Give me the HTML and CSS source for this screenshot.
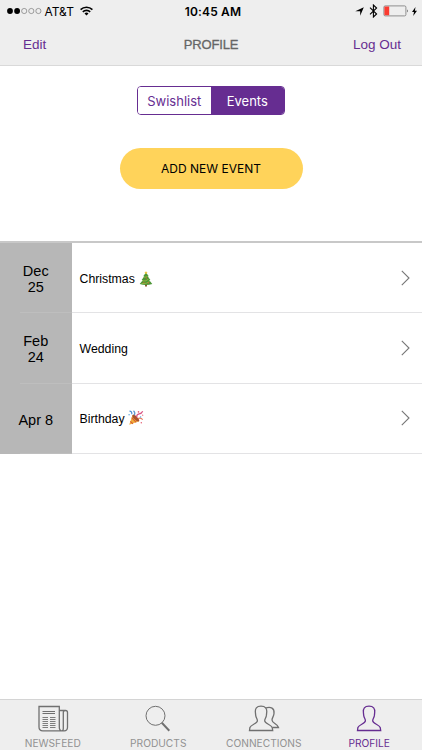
FILE: index.html
```html
<!DOCTYPE html>
<html lang="en">
<head>
  <meta charset="UTF-8" />
  <meta name="viewport" content="width=device-width, initial-scale=1.0"/>
  <title>Profile - Events</title>
  <link rel="stylesheet" href="styles.css">
</head>
<body>
  <header class="header">
    <div class="status-bar">
      <div class="status-left">
        <svg class="signal" width="35" height="8" viewBox="0 0 35 8">
          <circle cx="3" cy="4" r="2.9"/>
          <circle cx="10.1" cy="4" r="2.9"/>
          <g fill="none" stroke="#666" stroke-width=".6">
            <circle cx="17.2" cy="4" r="2.6"/>
            <circle cx="24.3" cy="4" r="2.6"/>
            <circle cx="31.4" cy="4" r="2.6"/>
          </g>
        </svg>
        <span class="carrier">AT&amp;T</span>
        <svg class="wifi" width="13" height="10" viewBox="0 0 13 10">
          <g fill="none" stroke="#000" stroke-width="1.6">
            <path d="M.6 3.6a8.4 8.4 0 0 1 11.8 0"/>
            <path d="M2.8 5.9a5.3 5.3 0 0 1 7.4 0"/>
          </g>
          <path d="M4.5 7.5a2.9 2.9 0 0 1 4 0l-2 2.1z"/>
        </svg>
      </div>
      <span class="time">10:45 AM</span>
      <div class="status-right">
        <svg width="9" height="9" viewBox="0 0 9 9"><path d="M8.8.2L5.2 8.8V4.2H.3z"/></svg>
        <svg class="bluetooth" width="9" height="14" viewBox="0 0 9 14"><path d="M1 3.7l6.6 6.3-3.2 3V1l3.2 3L1 10.3" fill="none" stroke="#000" stroke-width="1.1"/></svg>
        <svg class="battery" width="26" height="12" viewBox="0 0 26 12">
          <rect x=".9" y=".9" width="22" height="10" rx="1.3" fill="none" stroke="#777" stroke-width=".8"/>
          <path d="M2 1.5h4.2v8.8H2a.6.6 0 0 1-.6-.6V2.1a.6.6 0 0 1 .6-.6z" fill="#fb3b30"/>
          <path d="M24 4.2q1.6 1.7 0 3.4z" fill="#444"/>
        </svg>
        <svg width="5" height="9" viewBox="0 0 5 9"><path d="M3.5 0L0 5h2l-.8 4L5 3.7H2.9z"/></svg>
      </div>
    </div>
    <nav class="nav-bar">
      <a class="nav-edit" href="#">Edit</a>
      <h1>PROFILE</h1>
      <a class="nav-logout" href="#">Log Out</a>
    </nav>
  </header>

  <main class="main">
    <div class="segmented">
      <button class="segment">Swishlist</button>
      <button class="segment active">Events</button>
    </div>
    <button class="add-btn">ADD NEW EVENT</button>

    <ul class="events">
      <li class="event">
        <div class="event-date">Dec<br>25</div>
        <div class="event-body">
          <span>Christmas</span>
          <svg class="tree" width="14" height="16" viewBox="0 0 14 16">
            <path d="M6 13h2v2.6H6z" fill="#8b5a35"/>
            <path d="M7 1.4L4.2 5.3l1.1-.1L2.6 9l1.3-.1L.7 13q6.3 1.8 12.6 0L10.1 8.9l1.3.1-2.7-3.8 1.1.1z" fill="#4c9636"/>
            <path d="M4.9 6.1q2.4.5 3.8-1M3.4 10q3.8.5 6.2-2M2.6 12.6q5 .4 8.1-2" fill="none" stroke="#a4b83e" stroke-width=".8"/>
            <path d="M7 0l.5 1 1.1.2-.8.8.2 1.1-1-.5-1 .5.2-1.1-.8-.8L6.5 1z" fill="#edc63e"/>
            <g fill="#d65b35"><circle cx="7.4" cy="6.9" r=".6"/><circle cx="4.9" cy="11.5" r=".6"/><circle cx="9.4" cy="11.9" r=".6"/></g>
          </svg>
          <svg class="chevron" width="9" height="16" viewBox="0 0 9 16"><path d="M.8.8L8 8 .8 15.2"/></svg>
        </div>
      </li>
      <li class="event">
        <div class="event-date">Feb<br>24</div>
        <div class="event-body">
          <span>Wedding</span>
          <svg class="chevron" width="9" height="16" viewBox="0 0 9 16"><path d="M.8.8L8 8 .8 15.2"/></svg>
        </div>
      </li>
      <li class="event">
        <div class="event-date">Apr 8</div>
        <div class="event-body">
          <span>Birthday</span>
          <svg class="party" width="16" height="16" viewBox="0 0 16 16">
            <path d="M4.6 5L1.2 14.8 11 11.3z" fill="#f1ae3c"/>
            <path d="M3.7 7.7l4.5 4.6M2.4 11.4l2.5 2.5" stroke="#d65c34" stroke-width="1.1"/>
            <ellipse cx="7.8" cy="8.1" rx="1.7" ry="4.5" transform="rotate(-45 7.8 8.1)" fill="#a8532f"/>
            <g fill="none" stroke-width="1.2">
              <path d="M1.5 1.2q2.6 0 2.3 3" stroke="#4a8ed4"/>
              <path d="M5.5.8q2.2 2 .8 4.5" stroke="#6096ce"/>
              <path d="M8.7 7.2q-.2-3 2.4-3.3t3.6-2.6" stroke="#d85384"/>
              <path d="M9.9 8.6q2.6-1.5 4.8 1" stroke="#e77656"/>
            </g>
            <g fill="#e45870"><circle cx="10.5" cy="1.9" r=".8"/><circle cx="14.7" cy="5.2" r=".6"/><circle cx="13.3" cy="12.8" r=".7"/></g>
            <g fill="#58a4d8"><circle cx="1.1" cy="4.7" r=".7"/><circle cx="12.6" cy="7" r=".7"/></g>
          </svg>
          <svg class="chevron" width="9" height="16" viewBox="0 0 9 16"><path d="M.8.8L8 8 .8 15.2"/></svg>
        </div>
      </li>
    </ul>
  </main>

  <nav class="tab-bar">
    <a class="tab" href="#">
      <svg width="32" height="28" viewBox="0 0 32 28">
        <path d="M22.3 22V1.5H2V22q0 3.800 3.800 3.800h21.400q3.300 0 3.300-3.500V7.500q0-2-2-2h-6.200M22.300 22q0 3.800 2.500 3.800 1.500 0 1.500-2.300V7.500q0-2 2-2" stroke-width="1.300"/>
        <path d="M5.500 6.500H18M5.500 8.500H18" stroke-width="1"/>
        <path d="M5.500 12.500H11M5.500 14.500H11M5.500 16.500H11M5.500 18.500H11M5.500 20.500H11M5.500 22.500H11M13 12.500h5.500M13 14.500h5.500M13 16.500h5.500M13 18.500h5.500M13 20.500h5.500M13 22.500h5.500" stroke-width=".9"/>
      </svg>
      <span>NEWSFEED</span>
    </a>
    <a class="tab" href="#">
      <svg width="32" height="28" viewBox="0 0 32 28">
        <circle cx="13.500" cy="10.800" r="9.500" stroke-width="1"/>
        <path d="M19.800 17.800l7.500 8" stroke-width="2"/>
      </svg>
      <span>PRODUCTS</span>
    </a>
    <a class="tab" href="#">
      <svg width="32" height="28" viewBox="0 0 32 28">
        <path d="M13 1.200c-4.500 0-6 2.500-5.600 6.200l.3 3c.3 2.400 1.700 3.500 1.700 5.300 0 3-6.500 3.800-7.500 6.800L1.500 25.500h23.200l-.5-3c-1-3-7.500-3.800-7.500-6.800 0-1.800 1.400-2.900 1.700-5.300l.3-3C19.100 3.700 17.500 1.200 13 1.200z" stroke-width="1.300"/>
        <path d="M17.500 3c5.500-1.600 9.100.2 8.500 5.500-.2 3-2 4.200-2 6.500 0 3.300 5.400 3.500 6.500 7.500h-6" stroke-width="1.300"/>
      </svg>
      <span>CONNECTIONS</span>
    </a>
    <a class="tab active" href="#">
      <svg width="32" height="28" viewBox="0 0 32 28">
        <path d="M16 1.200c-4.500 0-6 2.500-5.600 6.200l.3 3c.3 2.400 1.700 3.500 1.700 5.300 0 3-6.500 3.800-7.500 6.800L4.500 25.500h23.200l-.5-3c-1-3-7.500-3.800-7.500-6.800 0-1.800 1.400-2.900 1.700-5.300l.3-3C22.100 3.700 20.500 1.200 16 1.200z" stroke-width="1.300"/>
      </svg>
      <span>PROFILE</span>
    </a>
  </nav>
</body>
</html>
```

FILE: styles.css
```css
:root {
  --bar: #eee;
  --line: #e3e3e5;
  --purple: #662d91;
  --yellow: #ffd35a;
  --date-bg: #b7b7b7;
}

* {
  margin: 0;
  padding: 0;
  box-sizing: border-box;
}

body {
  font-family: 'Inter', sans-serif;
  background-color: #fff;
  color: #000;
  display: flex;
  flex-direction: column;
  height: 100vh;
  overflow: hidden;
}

a {
  color: inherit;
  text-decoration: none;
}

svg {
  display: block;
  flex: none;
}

span {
  white-space: nowrap;
}

.header {
  height: 66px;
  background-color: var(--bar);
  border-bottom: 1px solid #d9d9d9;
}

.status-bar {
  display: grid;
  grid-template-columns: 1fr auto 1fr;
  align-items: center;
  height: 22px;
  padding: 0 5px 0 7px;
}

.status-left,
.status-right {
  display: flex;
  align-items: center;
}

.status-right {
  justify-content: flex-end;
}

.carrier {
  font-size: 12px;
  margin-left: 2.5px;
  width: 35px;
}

.time {
  font-size: 12px;
  font-weight: 600;
  letter-spacing: 0.15px;
  padding-left: 2px;
}

.bluetooth {
  margin: 0 5px 0 5px;
}

.battery {
  margin-right: 3px;
}

.nav-bar {
  display: grid;
  grid-template-columns: 1fr auto 1fr;
  align-items: center;
  height: 44px;
  padding: 0 21px 0 23px;
  font-family: 'Liberation Sans', sans-serif;
  font-size: 13.5px;
  color: var(--purple);
}

.nav-bar h1 {
  font-size: 13px;
  font-weight: 400;
  letter-spacing: -0.15px;
  padding-right: 2px;
  color: #666;
  -webkit-text-stroke: 0.3px #666;
}

.nav-logout {
  text-align: right;
}

.main {
  flex: 1;
  display: flex;
  flex-direction: column;
  align-items: center;
  padding-top: 20px;
}

.segmented {
  display: flex;
  width: 148px;
  height: 29px;
  border: 1px solid var(--purple);
  border-radius: 4px;
  overflow: hidden;
}

.segment {
  flex: 1;
  border: none;
  background: #fff;
  color: var(--purple);
  font-family: inherit;
  font-size: 13px;
}

.segment:first-child {
  flex: 0 0 72.5px;
}

.segment.active {
  background-color: var(--purple);
  color: #fff;
}

.add-btn {
  width: 183px;
  height: 41px;
  margin-top: 33px;
  border: none;
  border-radius: 21px;
  background-color: var(--yellow);
  color: #000;
  font-family: inherit;
  font-size: 12px;
}

.events {
  width: 100%;
  margin-top: 52px;
  border-top: 2px solid #c8c8c8;
  list-style: none;
  font-family: 'Liberation Sans', sans-serif;
}

.event {
  display: flex;
  height: 70.5px;
}

.event:first-child {
  height: 70px;
}

.event-date {
  width: 71.5px;
  display: flex;
  align-items: center;
  justify-content: center;
  padding-top: 2px;
  background: linear-gradient(#bebebe, #bebebe) 20px 100% / 100% 1px no-repeat var(--date-bg);
  font-size: 14.5px;
  line-height: 16px;
  text-align: center;
}

.event-body {
  flex: 1;
  display: flex;
  align-items: center;
  padding: 2px 12px 0 8px;
  border-bottom: 1px solid var(--line);
  font-size: 12.3px;
}

.tree {
  margin-left: 4px;
}

.party {
  margin: -2px 0 0 3px;
}

.chevron {
  margin: -2px 0 0 auto;
}

.chevron path {
  fill: none;
  stroke: #777;
  stroke-width: 1.1;
}

.tab-bar {
  display: flex;
  height: 51px;
  background-color: var(--bar);
  border-top: 1px solid #d4d4d4;
}

.tab {
  flex: 1;
  display: flex;
  flex-direction: column;
  align-items: center;
  padding-top: 5px;
  color: #929292;
  font-size: 10.2px;
  line-height: 12px;
}

.tab svg {
  fill: none;
  stroke: #707070;
}

.tab span {
  margin-top: 4px;
}

.tab.active {
  color: var(--purple);
}

.tab.active svg {
  stroke: var(--purple);
}
```
